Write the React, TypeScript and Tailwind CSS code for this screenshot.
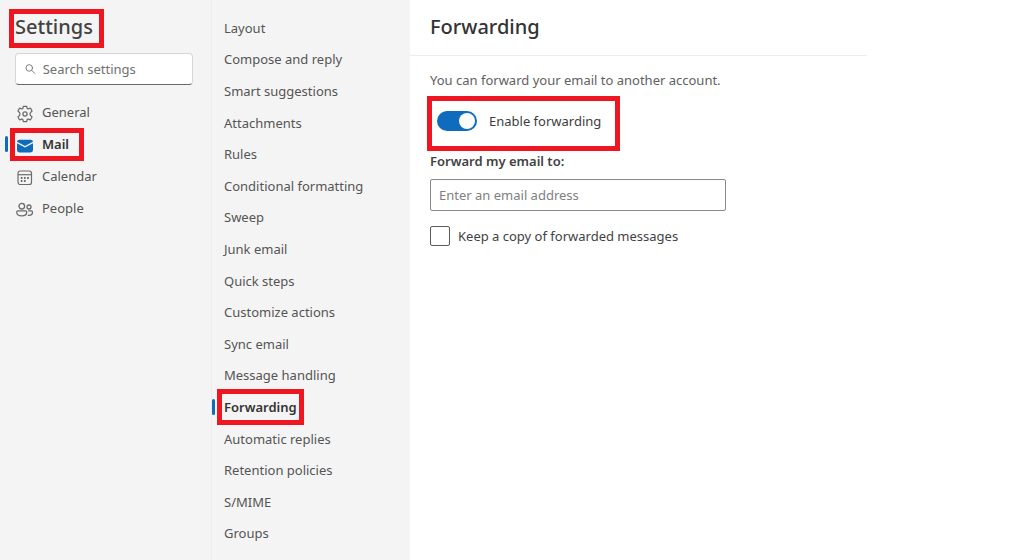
import { useState } from "react";

const categories = [
  { label: "General", icon: GearIcon },
  { label: "Mail", icon: MailIcon },
  { label: "Calendar", icon: CalendarIcon },
  { label: "People", icon: PeopleIcon },
];

const mailSections = [
  "Layout",
  "Compose and reply",
  "Smart suggestions",
  "Attachments",
  "Rules",
  "Conditional formatting",
  "Sweep",
  "Junk email",
  "Quick steps",
  "Customize actions",
  "Sync email",
  "Message handling",
  "Forwarding",
  "Automatic replies",
  "Retention policies",
  "S/MIME",
  "Groups",
];

function GearIcon() {
  return (
    <svg width="18" height="18" viewBox="0 0 20 20" fill="none" stroke="#6b6b6b" strokeWidth="1.4" strokeLinejoin="round" aria-hidden="true">
      <path d="M8.1 1.6Q10 1.2 11.9 1.6L12.3 3.6Q12.6 4.6 13.7 4.3L15.9 3.5Q17.2 4.9 17.8 6.8L16.1 8.3Q15 10 16.1 11.7L17.8 13.2Q17.2 15.1 15.9 16.5L13.7 15.7Q12.6 15.4 12.3 16.4L11.9 18.4Q10 18.8 8.1 18.4L7.7 16.4Q7.4 15.4 6.3 15.7L4.1 16.5Q2.8 15.1 2.2 13.2L3.9 11.7Q5 10 3.9 8.3L2.2 6.8Q2.8 4.9 4.1 3.5L6.3 4.3Q7.4 4.6 7.7 3.6Z" />
      <circle cx="10" cy="10" r="2.3" />
    </svg>
  );
}

function MailIcon() {
  return (
    <svg width="18" height="18" viewBox="0 0 18 18" fill="#0f6cbd" aria-hidden="true">
      <path d="M1 6.2 9 10.4 17 6.2V13a2.4 2.4 0 0 1-2.4 2.4H3.4A2.4 2.4 0 0 1 1 13Z" />
      <path d="M3.4 2.8h11.2A2.3 2.3 0 0 1 17 4.8L9 9 1 4.8a2.3 2.3 0 0 1 2.4-2Z" />
    </svg>
  );
}

function CalendarIcon() {
  return (
    <svg width="18" height="18" viewBox="0 0 18 18" fill="none" stroke="#6b6b6b" strokeWidth="1.2" aria-hidden="true">
      <rect x="2" y="2" width="13.5" height="13.5" rx="2.3" />
      <path d="M2 5.7h13.5" />
      <g fill="#5a5a5a" stroke="none">
        <circle cx="5.6" cy="9" r="1" />
        <circle cx="8.8" cy="9" r="1" />
        <circle cx="12" cy="9" r="1" />
        <circle cx="5.6" cy="12.1" r="1" />
        <circle cx="8.8" cy="12.1" r="1" />
      </g>
    </svg>
  );
}

function PeopleIcon() {
  return (
    <svg width="18" height="18" viewBox="0 0 18 18" fill="none" stroke="#6b6b6b" strokeWidth="1.3" aria-hidden="true">
      <circle cx="5.8" cy="5.2" r="2.8" />
      <circle cx="13" cy="6" r="2" />
      <path d="M2 9.9h7.4a1.3 1.3 0 0 1 1.3 1.3c0 2.3-1.9 3.7-5 3.7s-5-1.4-5-3.7A1.3 1.3 0 0 1 2 9.900Z" />
      <path d="M12.100 9.900h3.100a1.300 1.300 0 0 1 1.300 1.300c0 2-1.300 3.100-3.400 3.100-.5 0-.9 0-1.300-.1" />
    </svg>
  );
}

function SearchIcon() {
  return (
    <svg width="12" height="12" viewBox="0 0 12 12" fill="none" stroke="currentColor" strokeLinecap="round" aria-hidden="true">
      <circle cx="4.8" cy="4.8" r="3.7" />
      <path d="m7.6 7.6 3.4 3.4" />
    </svg>
  );
}

// Red callout frame drawn over the element it marks
function Callout({ className }: { className: string }) {
  return <span aria-hidden="true" className={`pointer-events-none absolute z-10 border-[5px] border-[#ee1620] ${className}`} />;
}

export default function App() {
  const [enabled, setEnabled] = useState(true);
  const [keepCopy, setKeepCopy] = useState(false);
  const [email, setEmail] = useState("");

  return (
    <div className="flex min-h-screen bg-white font-['Noto_Sans',sans-serif] text-[13px] leading-5 text-[#555555]">
      {/* Categories */}
      <aside className="w-[212px] shrink-0 border-r border-[#ededed] bg-[#f4f4f4] pt-3">
        <h1 className="relative ml-[15px] w-fit text-xl leading-[30px] font-medium text-[#424242]">
          Settings
          <Callout className="-top-[3px] -right-[11px] -bottom-[6px] -left-[6px]" />
        </h1>

        <label className="mt-[11px] mr-[18px] ml-[15px] flex h-8 items-center gap-[7px] rounded border border-[#d6d6d6] border-b-[#6b6b6b] bg-white px-[9px] text-[#707070]">
          <SearchIcon />
          <input
            type="search"
            aria-label="Search settings"
            placeholder="Search settings"
            className="w-full min-w-0 bg-transparent outline-none placeholder:text-[#707070]"
          />
        </label>

        <nav aria-label="Settings categories" className="mt-[11px]">
          {categories.map(({ label, icon: Icon }) => {
            const active = label === "Mail";
            return (
              <a
                key={label}
                href={`#${label.toLowerCase()}`}
                aria-current={active ? "page" : undefined}
                className="flex h-8 items-center pl-[5px]"
              >
                <span className={`h-4 w-[3px] rounded-full ${active ? "bg-[#0f6cbd]" : ""}`} />
                <span className="relative ml-2 flex items-center gap-2">
                  <span className="pt-[3px]">
                    <Icon />
                  </span>
                  <span className={active ? "font-semibold text-[#333333]" : ""}>{label}</span>
                  {active && <Callout className="-inset-y-[6px] -right-[15px] -left-[6px]" />}
                </span>
              </a>
            );
          })}
        </nav>
      </aside>

      {/* Mail sections */}
      <nav aria-label="Mail settings" className="flex w-[198px] shrink-0 flex-col bg-[#f4f4f4] pt-3 pb-[11px]">
        {mailSections.map((section) => {
          const active = section === "Forwarding";
          return (
            <a
              key={section}
              href={`#${section.toLowerCase().replace(/\W+/g, "-")}`}
              aria-current={active ? "page" : undefined}
              className="flex flex-1 items-center"
            >
              <span className={`h-4 w-[3px] rounded-full ${active ? "bg-[#0f6cbd]" : ""}`} />
              <span className={`relative ml-[9px] ${active ? "font-semibold text-[#333333]" : ""}`}>
                {section}
                {active && <Callout className="-inset-x-[7px] -inset-y-2" />}
              </span>
            </a>
          );
        })}
      </nav>

      <main className="min-w-0 flex-1">
        <header className="mr-[158px] border-b border-[#ededed] pt-3 pb-[13px] pl-5">
          <h2 className="text-xl leading-[30px] font-medium text-[#333333]">Forwarding</h2>
        </header>

        <div className="pt-[14px] pl-5">
          <p className="text-[#616161]">You can forward your email to another account.</p>

          <div className="relative mt-[21px] ml-[7px] flex w-fit items-center gap-3">
            <button
              type="button"
              role="switch"
              id="enable-forwarding"
              aria-checked={enabled}
              onClick={() => setEnabled(!enabled)}
              className={`flex h-5 w-10 items-center rounded-full px-[2px] ${enabled ? "justify-end bg-[#0f6cbd]" : "bg-[#8a8a8a]"}`}
            >
              <span className="size-4 rounded-full bg-white" />
            </button>
            <label htmlFor="enable-forwarding" className="text-[#3d3d3d]">
              Enable forwarding
            </label>
            <Callout className="-top-[15px] -right-[19px] -bottom-5 -left-[10px]" />
          </div>

          <label htmlFor="forward-to" className="mt-5 block font-semibold text-[#424242]">
            Forward my email to:
          </label>
          <input
            id="forward-to"
            type="email"
            value={email}
            onChange={(e) => setEmail(e.target.value)}
            placeholder="Enter an email address"
            className="mt-2 block h-8 w-[296px] max-w-full rounded-xs border border-[#8a8a8a] bg-white px-2 outline-none placeholder:text-[#808080]"
          />

          <label className="mt-[15px] flex w-fit items-center gap-2 text-[#424242]">
            <input
              type="checkbox"
              checked={keepCopy}
              onChange={(e) => setKeepCopy(e.target.checked)}
              className="size-5 appearance-none rounded-xs border border-[#5c5c5c] bg-white checked:bg-[#0f6cbd]"
            />
            Keep a copy of forwarded messages
          </label>
        </div>
      </main>
    </div>
  );
}
